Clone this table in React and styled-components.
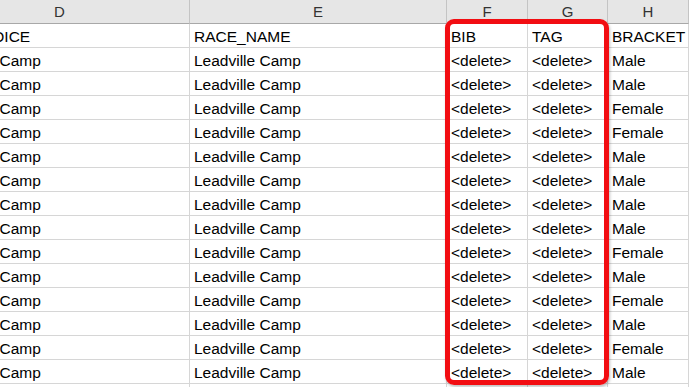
import React from 'react';
import styled, { createGlobalStyle } from 'styled-components';

const GlobalStyle = createGlobalStyle`
  html, body {
    margin: 0;
    padding: 0;
    background: #ffffff;
    overflow: hidden;
  }
`;

const Sheet = styled.div`
  position: relative;
  width: 689px;
  height: 387px;
  overflow: hidden;
  background: #fff;
  font-family: "Liberation Sans", Arial, sans-serif;
`;

const Grid = styled.div`
  display: grid;
  grid-template-columns: 260px 257px 81px 80px 81px 40px;
  grid-auto-rows: 24px;
  margin-left: -70px;
  width: max-content;
`;

const HeaderCell = styled.div`
  box-sizing: border-box;
  background: #e6e6e6;
  border-right: 1px solid #c4c4c4;
  border-bottom: 1px solid #a8a8a8;
  color: #333;
  font-size: 15px;
  line-height: 22px;
  padding-top: 1px;
  text-align: center;
`;

const Cell = styled.div`
  box-sizing: border-box;
  border-right: 1px solid #d6d6d6;
  border-bottom: 1px solid #d6d6d6;
  color: #000;
  font-size: 15.5px;
  line-height: 21px;
  padding: 2px 0 0 4px;
  white-space: nowrap;
  overflow: hidden;
`;

const Highlight = styled.div`
  position: absolute;
  left: 445px;
  top: 19px;
  width: 164px;
  height: 366px;
  box-sizing: border-box;
  border: 5px solid #f20d12;
  border-radius: 9px;
  box-shadow: 1px 2px 3px rgba(0, 0, 0, 0.25);
  pointer-events: none;
`;

const columns = ['D', 'E', 'F', 'G', 'H', 'I'];

const brackets = [
  'Male', 'Male', 'Female', 'Female', 'Male', 'Male', 'Male',
  'Male', 'Female', 'Male', 'Female', 'Male', 'Female', 'Male',
];

const rows = [
  ['ALT_CHOICE', 'RACE_NAME', 'BIB', 'TAG', 'BRACKET', ''],
  ...brackets.map((b) => ['Leadville Camp', 'Leadville Camp', '<delete>', '<delete>', b, '']),
  ['', '', '', '', '', ''],
];

export default function App() {
  return (
    <>
      <GlobalStyle />
      <Sheet>
        <Grid>
          {columns.map((c) => (
            <HeaderCell key={c}>{c === 'I' ? '' : c}</HeaderCell>
          ))}
          {rows.map((row, i) =>
            row.map((val, j) => <Cell key={`${i}-${j}`}>{val}</Cell>)
          )}
        </Grid>
        <Highlight />
      </Sheet>
    </>
  );
}
